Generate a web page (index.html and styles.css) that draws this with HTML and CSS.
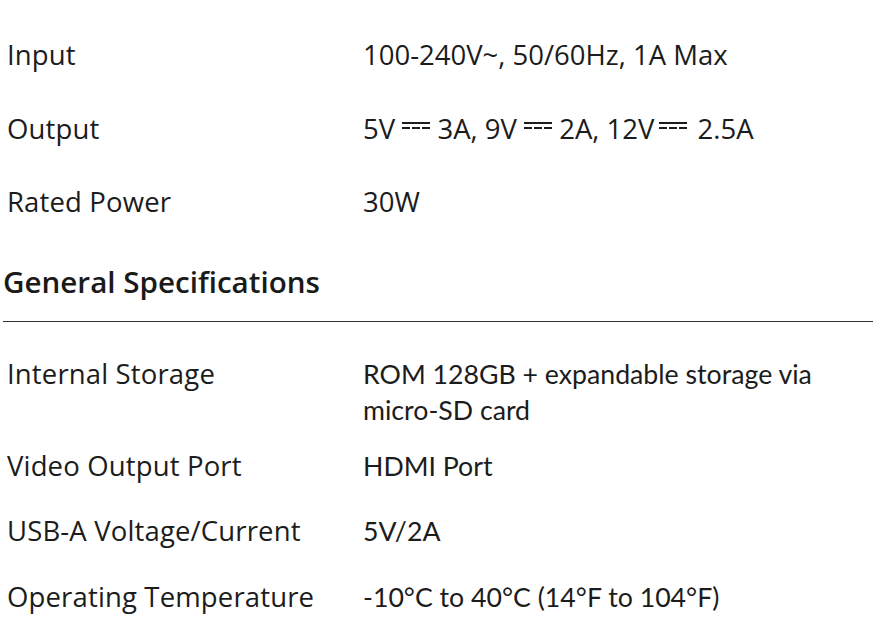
FILE: index.html
```html
<!DOCTYPE html>
<html>
<head>
<meta charset="utf-8">
<link rel="stylesheet" href="styles.css">
</head>
<body>
<div class="page">
  <table class="spec spec-power">
    <tr><td class="label">Input</td><td class="value">100-240V~, 50/60Hz, 1A Max</td></tr>
    <tr><td class="label">Output</td><td class="value">5V <span class="dc"></span> 3A, 9V <span class="dc"></span> 2A, 12V<span class="dc dc-tight"></span> 2.5A</td></tr>
    <tr><td class="label">Rated Power</td><td class="value">30W</td></tr>
  </table>
  <h2 class="section-title">General Specifications</h2>
  <table class="spec spec-general">
    <tr class="r1"><td class="label">Internal Storage</td><td class="value alt">ROM 128GB + expandable storage via micro-SD card</td></tr>
    <tr class="r2"><td class="label">Video Output Port</td><td class="value alt">HDMI Port</td></tr>
    <tr class="r3"><td class="label">USB-A Voltage/Current</td><td class="value alt">5V/2A</td></tr>
    <tr class="r4"><td class="label">Operating Temperature</td><td class="value alt">-10°C to 40°C (14°F to 104°F)</td></tr>
  </table>
</div>
</body>
</html>
```

FILE: styles.css
```css
html, body {
  margin: 0;
  padding: 0;
  background: #ffffff;
}
body {
  color: #1c1c1c;
  font-family: "Open Sans", "Noto Sans", sans-serif;
}
.page {
  width: 870px;
  padding: 0 5px 0 3px;
  overflow: hidden;
  height: 636px;
}
.spec {
  border-collapse: collapse;
  width: 100%;
  table-layout: fixed;
}
.spec td {
  padding: 0;
  vertical-align: top;
  font-size: 27.5px;
  letter-spacing: 0.15px;
  line-height: 36px;
  white-space: nowrap;
}
.spec td.label {
  width: 356px;
  padding-left: 4px;
}
.spec td.value {
  letter-spacing: 0;
}
.spec-power {
  margin-top: 37px;
}
.spec-power tr td {
  padding-bottom: 37.5px;
}
.spec-power tr:last-child td {
  padding-bottom: 0;
}
.spec td.value.alt {
  font-family: "Lato", "Noto Sans", sans-serif;
  font-size: 26.7px;
  white-space: normal;
  padding-right: 50px;
}
.dc {
  display: inline-block;
  width: 28px;
  height: 5px;
  vertical-align: 10px;
  border-top: 2px solid #1c1c1c;
  background: repeating-linear-gradient(90deg, #1c1c1c 0 8px, transparent 8px 10px) bottom / 100% 2px no-repeat;
}
.dc-tight {
  margin-left: 5px;
  margin-right: 3px;
}
.section-title {
  margin: 44px 0 0 0;
  font-size: 29.6px;
  font-weight: 600;
  line-height: 36px;
  color: #1a1a1a;
}
.spec-general {
  border-top: 1px solid #333;
  margin-top: 21px;
}
.spec-general .r1 td { padding-top: 34px; }
.spec-general .r2 td { padding-top: 20px; }
.spec-general .r3 td { padding-top: 29px; }
.spec-general .r4 td { padding-top: 30px; }
```
